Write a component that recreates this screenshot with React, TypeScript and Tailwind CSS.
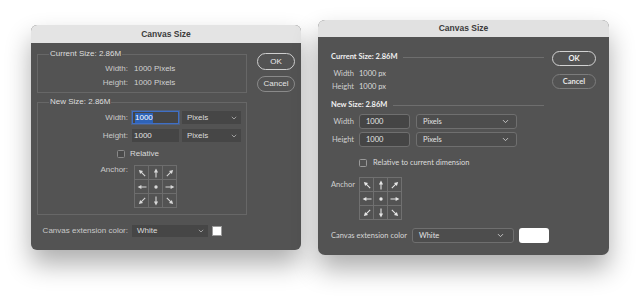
import { ChevronDown } from "lucide-react";

type Dir = "nw" | "n" | "ne" | "w" | "c" | "e" | "sw" | "s" | "se";

const angles: Record<Dir, number> = { nw: -45, n: 0, ne: 45, w: -90, c: 0, e: 90, sw: -135, s: 180, se: 135 };
const anchorDirs: Dir[] = ["nw", "n", "ne", "w", "c", "e", "sw", "s", "se"];

function Arrow({ dir, color }: { dir: Dir; color: string }) {
  if (dir === "c") {
    return (
      <svg width="10" height="10" viewBox="0 0 10 10">
        <circle cx="5" cy="5" r="1.7" fill={color} />
      </svg>
    );
  }
  return (
    <svg width="10" height="10" viewBox="0 0 10 10" style={{ transform: `rotate(${angles[dir]}deg)` }}>
      <line x1="5" y1="9.5" x2="5" y2="3.5" stroke={color} strokeWidth="1.1" />
      <polygon points="5,0.6 2.9,4.4 7.1,4.4" fill={color} />
    </svg>
  );
}

function AnchorGrid({ line, color }: { line: string; color: string }) {
  return (
    <div className={`grid grid-cols-[13px_13px_13px] gap-px border ${line}`}>
      {anchorDirs.map((d) => (
        <div key={d} className="flex h-[13px] w-[13px] items-center justify-center bg-[#535353]">
          <Arrow dir={d} color={color} />
        </div>
      ))}
    </div>
  );
}

function SmallChevron() {
  return (
    <svg width="6" height="4" viewBox="0 0 6 4" className="shrink-0">
      <path d="M0.8 0.8 L3 3 L5.2 0.8" fill="none" stroke="#a8a8a8" strokeWidth="0.9" />
    </svg>
  );
}

function ClassicDialog() {
  const label = "w-[90px] shrink-0 text-right text-[#c9c9c9]";
  return (
    <div className="ml-[31px] mt-[25px] h-[225px] w-[270px] shrink-0 overflow-hidden rounded-[6px] bg-[#535353] font-['Liberation_Sans',Arial,sans-serif] text-[8px] shadow-[0_14px_26px_rgba(0,0,0,0.32)]">
      <div className="h-[18px] bg-[#e4e4e4] text-center text-[8.5px] font-bold leading-[18px] text-[#3b3b3b]">Canvas Size</div>
      <div className="flex px-[6px]">
        <div className="w-[210px]">
          <div className="relative mt-[11px] h-[39px] border border-[#676767] pt-[7px] leading-[14px]">
            <span className="absolute left-[11px] top-[-8px] bg-[#535353] px-[1px] text-[#dedede]">Current Size: 2.86M</span>
            <div className="flex">
              <span className={label}>Width:</span>
              <span className="ml-[6px] text-[#d2d2d2]">1000 Pixels</span>
            </div>
            <div className="flex">
              <span className={label}>Height:</span>
              <span className="ml-[6px] text-[#d2d2d2]">1000 Pixels</span>
            </div>
          </div>

          <div className="relative mt-[9px] h-[113px] border border-[#676767] pt-[8px]">
            <span className="absolute left-[11px] top-[-8px] bg-[#535353] px-[1px] leading-[14px] text-[#dedede]">New Size: 2.86M</span>
            <div className="flex items-center">
              <span className={label}>Width:</span>
              <div className="ml-[4px] flex h-[13px] w-[47px] items-center border border-[#3f6fc6] bg-[#454545] pl-[2px] shadow-[0_0_0_1px_rgba(70,120,210,0.35)]">
                <span className="bg-[#2e63b8] leading-[10px] text-white">1000</span>
              </div>
              <div className="ml-[3px] flex h-[13px] w-[59px] items-center justify-between bg-[#464646] pl-[5px] pr-[4px] text-[#dcdcdc]">
                Pixels
                <SmallChevron />
              </div>
            </div>
            <div className="mt-[5px] flex items-center">
              <span className={label}>Height:</span>
              <div className="ml-[4px] flex h-[13px] w-[47px] items-center bg-[#454545] pl-[2px] text-[#e2e2e2]">1000</div>
              <div className="ml-[3px] flex h-[13px] w-[59px] items-center justify-between bg-[#464646] pl-[5px] pr-[4px] text-[#dcdcdc]">
                Pixels
                <SmallChevron />
              </div>
            </div>
            <div className="mt-[6px] flex items-center pl-[79px]">
              <div className="h-[8px] w-[8px] rounded-[1.5px] border border-[#8a8a8a] bg-[#4a4a4a]" />
              <span className="ml-[5px] text-[#dadada]">Relative</span>
            </div>
            <div className="mt-[5px] flex items-start">
              <span className={`${label} leading-[10px]`}>Anchor:</span>
              <div className="ml-[6px]">
                <AnchorGrid line="border-[#6d6d6d] bg-[#6d6d6d]" color="#d8d8d8" />
              </div>
            </div>
          </div>

          <div className="mt-[10px] flex items-center">
            <span className="w-[91px] shrink-0 text-right text-[#c9c9c9]">Canvas extension color:</span>
            <div className="ml-[4px] flex h-[12px] w-[76px] items-center justify-between bg-[#464646] pl-[5px] pr-[4px] text-[#dcdcdc]">
              White
              <SmallChevron />
            </div>
            <div className="ml-[4px] h-[10px] w-[10px] border border-[#9a9a9a] bg-white" />
          </div>
        </div>

        <div className="ml-[10px] mt-[10px] flex w-[38px] flex-col">
          <div className="flex h-[17px] items-center justify-center rounded-full border border-[#cfcfcf] text-[#ececec]">OK</div>
          <div className="mt-[6px] flex h-[16px] items-center justify-center rounded-full border border-[#8a8a8a] text-[#e4e4e4]">Cancel</div>
        </div>
      </div>
    </div>
  );
}

function ModernDialog() {
  const label = "w-[23px] shrink-0 text-right text-[#cfcfcf]";
  return (
    <div className="ml-[17px] mt-[20px] h-[235px] w-[291px] shrink-0 overflow-hidden rounded-[7px] bg-[#535353] font-['Lato',Arial,sans-serif] text-[7.5px] shadow-[0_14px_26px_rgba(0,0,0,0.32)]">
      <div className="h-[17px] bg-[#e1e1e1] text-center font-['Liberation_Sans',Arial,sans-serif] text-[8.5px] font-bold leading-[17px] text-[#3b3b3b]">Canvas Size</div>
      <div className="flex px-[13px]">
        <div className="w-[213px]">
          <div className="mt-[15px] flex h-[10px] items-center">
            <span className="font-bold text-[#f0f0f0]">Current Size: 2.86M</span>
            <div className="ml-[6px] h-px flex-1 bg-[#6e6e6e]" />
          </div>
          <div className="mt-[5px] flex h-[13px] items-center">
            <span className={label}>Width</span>
            <span className="ml-[5px] text-[#dcdcdc]">1000 px</span>
          </div>
          <div className="flex h-[13px] items-center">
            <span className={label}>Height</span>
            <span className="ml-[5px] text-[#dcdcdc]">1000 px</span>
          </div>
          <div className="mt-[7px] flex h-[10px] items-center">
            <span className="font-bold text-[#f0f0f0]">New Size: 2.86M</span>
            <div className="ml-[6px] h-px flex-1 bg-[#6e6e6e]" />
          </div>
          <div className="mt-[4px] flex items-center">
            <span className={label}>Width</span>
            <div className="ml-[5px] flex h-[15px] w-[51px] items-center rounded-[3px] border border-[#6f6f6f] bg-[#454545] pl-[6px] text-[#e6e6e6]">1000</div>
            <div className="ml-[6px] flex h-[15px] w-[101px] items-center justify-between rounded-[3px] border border-[#6f6f6f] bg-[#4d4d4d] pl-[6px] pr-[6px] text-[#e2e2e2]">
              Pixels
              <ChevronDown size={9} strokeWidth={2.2} color="#d8d8d8" />
            </div>
          </div>
          <div className="mt-[3px] flex items-center">
            <span className={label}>Height</span>
            <div className="ml-[5px] flex h-[15px] w-[51px] items-center rounded-[3px] border border-[#6f6f6f] bg-[#454545] pl-[6px] text-[#e6e6e6]">1000</div>
            <div className="ml-[6px] flex h-[15px] w-[101px] items-center justify-between rounded-[3px] border border-[#6f6f6f] bg-[#4d4d4d] pl-[6px] pr-[6px] text-[#e2e2e2]">
              Pixels
              <ChevronDown size={9} strokeWidth={2.2} color="#d8d8d8" />
            </div>
          </div>
          <div className="mt-[10px] flex items-center pl-[28px]">
            <div className="h-[8px] w-[8px] rounded-[1.5px] border border-[#9a9a9a]" />
            <span className="ml-[6px] text-[#dcdcdc]">Relative to current dimension</span>
          </div>
          <div className="mt-[9px] flex items-start">
            <span className={`${label} mt-[2px]`}>Anchor</span>
            <div className="ml-[5px]">
              <AnchorGrid line="border-[#707070] bg-[#707070]" color="#e6e6e6" />
            </div>
          </div>
          <div className="mt-[8px] flex items-center whitespace-nowrap">
            <span className="text-[#d6d6d6]">Canvas extension color</span>
            <div className="ml-[5px] flex h-[15px] w-[102px] shrink-0 items-center justify-between rounded-[3px] border border-[#6f6f6f] bg-[#4d4d4d] pl-[6px] pr-[8px] text-[#e2e2e2]">
              White
              <ChevronDown size={9} strokeWidth={2.2} color="#d8d8d8" />
            </div>
            <div className="ml-[5px] h-[15px] w-[30px] shrink-0 rounded-[3px] bg-white" />
          </div>
        </div>

        <div className="ml-[8px] mt-[14px] flex w-[44px] flex-col font-bold">
          <div className="flex h-[15px] items-center justify-center rounded-full border border-[#d2d2d2] text-[#f2f2f2]">OK</div>
          <div className="mt-[8px] flex h-[15px] items-center justify-center rounded-full border border-[#7c7c7c] text-[#e6e6e6]">Cancel</div>
        </div>
      </div>
    </div>
  );
}

export default function App() {
  return (
    <div className="flex h-[298px] w-[640px] items-start overflow-hidden bg-white">
      <ClassicDialog />
      <ModernDialog />
    </div>
  );
}
